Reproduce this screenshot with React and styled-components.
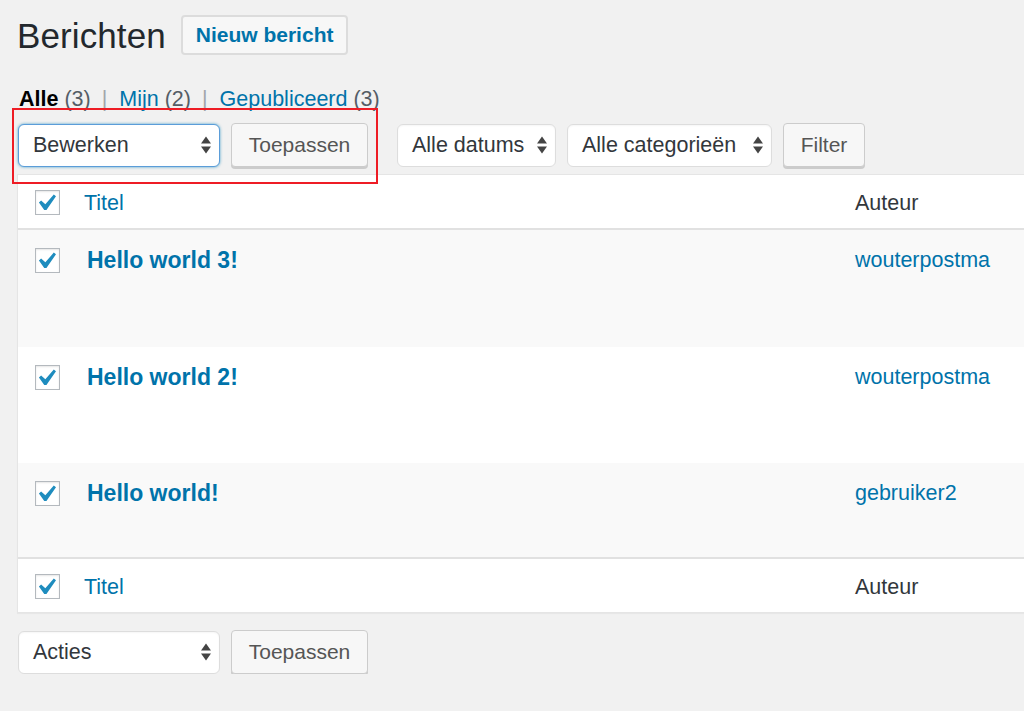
import React from "react";
import styled, { createGlobalStyle } from "styled-components";

const GlobalStyle = createGlobalStyle`
  html, body {
    margin: 0;
    padding: 0;
    background: #f1f1f1;
    overflow: hidden;
  }
  body {
    font-family: "Liberation Sans", Arial, Helvetica, sans-serif;
    color: #23282d;
  }
  * { box-sizing: border-box; }
`;

const Wrap = styled.div`
  padding: 15px 0 0 17px;
`;

const Header = styled.div`
  display: flex;
  align-items: center;
  gap: 15px;
`;

const PageTitle = styled.h1`
  margin: 0;
  font-size: 35px;
  font-weight: 400;
  line-height: 39px;
  color: #23282d;
  letter-spacing: 0.1px;
`;

const AddNew = styled.a`
  display: inline-flex;
  align-items: center;
  height: 40px;
  padding: 0 13px;
  border: 2px solid #dcdcdc;
  border-radius: 4px;
  background: #f7f7f7;
  color: #0073aa;
  font-size: 21px;
  font-weight: 700;
  text-decoration: none;
`;

const Tabs = styled.ul`
  display: flex;
  align-items: center;
  margin: 31px 0 0 2px;
  padding: 0;
  list-style: none;
  font-size: 21.5px;
  line-height: 26px;
`;

const Tab = styled.li`
  color: ${(p) => (p.$current ? "#000" : "#0073aa")};
  font-weight: ${(p) => (p.$current ? 700 : 400)};
`;

const Count = styled.span`
  color: #555d66;
  font-weight: 400;
`;

const Sep = styled.span`
  color: #a0a5aa;
  padding: 0 12px 0 11px;
`;

const Toolbar = styled.div`
  display: flex;
  align-items: center;
  margin-top: 11px;
  padding-left: 1px;
`;

const Group = styled.div`
  position: relative;
  display: flex;
  align-items: center;
  gap: 11px;
  margin-right: ${(p) => p.$gap || 0}px;
`;

const Highlight = styled.div`
  position: absolute;
  left: -6px;
  top: -15px;
  right: -10px;
  bottom: -17px;
  border: 2px solid #ee1c25;
  pointer-events: none;
`;

const SelectBox = styled.div`
  position: relative;
  display: flex;
  align-items: center;
  width: ${(p) => p.$width}px;
  height: 43px;
  padding: 0 30px 0 14px;
  background: #fff;
  border: 1px solid ${(p) => (p.$focus ? "#5b9dd9" : "#ddd")};
  border-radius: 6px;
  box-shadow: ${(p) =>
    p.$focus
      ? "0 0 3px rgba(30, 140, 190, 0.8)"
      : "inset 0 1px 2px rgba(0, 0, 0, 0.04)"};
  font-size: 21.5px;
  color: #32373c;
  white-space: nowrap;
`;

const Arrows = styled.svg`
  position: absolute;
  right: 8px;
  top: 50%;
  width: 10px;
  height: 19px;
  transform: translateY(-50%);
`;

const Button = styled.button`
  height: 44px;
  width: ${(p) => p.$width}px;
  padding: 0;
  background: #f7f7f7;
  border: 1px solid #ccc;
  border-radius: 4px;
  box-shadow: 0 2px 0 #ccc;
  font-family: inherit;
  font-size: 21px;
  color: #555;
`;

const Table = styled.div`
  margin: 7px -30px 0 0;
  background: #fff;
  border: 1px solid #e5e5e5;
  box-shadow: 0 1px 1px rgba(0, 0, 0, 0.04);
`;

const Row = styled.div`
  display: grid;
  grid-template-columns: 66px 771px 1fr;
  align-items: ${(p) => (p.$head ? "center" : "start")};
  height: ${(p) => p.$height}px;
  background: ${(p) => (p.$alt ? "#f9f9f9" : "#fff")};
  border-top: ${(p) => (p.$foot ? "2px solid #e1e1e1" : "none")};
  border-bottom: ${(p) => (p.$head && !p.$foot ? "2px solid #e1e1e1" : "none")};
  font-size: 21.5px;
`;

const CheckCell = styled.div`
  padding: ${(p) => (p.$head ? "2px" : "18px")} 0 0 17px;
  display: flex;
`;

const Check = styled.span`
  display: inline-flex;
  align-items: center;
  justify-content: center;
  width: 25px;
  height: 25px;
  background: #fff;
  border: 1px solid #b4b9be;
  box-shadow: inset 0 1px 2px rgba(0, 0, 0, 0.1);
`;

const HeadLink = styled.a`
  padding-top: 3px;
  color: #0073aa;
  text-decoration: none;
`;

const HeadText = styled.span`
  padding-top: 3px;
  color: #32373c;
`;

const PostTitle = styled.a`
  display: block;
  padding: 15px 0 0 3px;
  line-height: 30px;
  font-size: 23px;
  font-weight: 700;
  color: #0073aa;
  text-decoration: none;
`;

const AuthorLink = styled.a`
  display: block;
  padding-top: 15px;
  line-height: 30px;
  color: #0073aa;
  text-decoration: none;
`;

const BottomBar = styled(Toolbar)`
  margin-top: 17px;
`;

function Checkmark() {
  return (
    <svg width="24" height="24" viewBox="4 3 14 14">
      <path
        d="M14.83 4.89l1.34.94-5.81 8.38H9.02L5.78 9.67l1.34-1.25 2.57 2.4z"
        fill="#1e8cbe"
      />
    </svg>
  );
}

function Select({ label, width, focus }) {
  return (
    <SelectBox $width={width} $focus={focus}>
      {label}
      <Arrows viewBox="0 0 10 19">
        <polygon points="0,8 5,1 10,8" fill="#444" />
        <polygon points="0,11 10,11 5,18" fill="#444" />
      </Arrows>
    </SelectBox>
  );
}

const posts = [
  { title: "Hello world 3!", author: "wouterpostma", height: 117, alt: true },
  { title: "Hello world 2!", author: "wouterpostma", height: 116, alt: false },
  { title: "Hello world!", author: "gebruiker2", height: 94, alt: true },
];

function App() {
  return (
    <Wrap>
      <GlobalStyle />
      <Header>
        <PageTitle>Berichten</PageTitle>
        <AddNew href="#">Nieuw bericht</AddNew>
      </Header>

      <Tabs>
        <Tab $current>
          Alle <Count>(3)</Count>
        </Tab>
        <Sep>|</Sep>
        <Tab>
          Mijn <Count>(2)</Count>
        </Tab>
        <Sep>|</Sep>
        <Tab>
          Gepubliceerd <Count>(3)</Count>
        </Tab>
      </Tabs>

      <Toolbar>
        <Group $gap={29}>
          <Select label="Bewerken" width={202} focus />
          <Button $width={137}>Toepassen</Button>
          <Highlight />
        </Group>
        <Group>
          <Select label="Alle datums" width={159} />
          <Select label="Alle categorieën" width={205} />
          <Button $width={82}>Filter</Button>
        </Group>
      </Toolbar>

      <Table>
        <Row $head $height={55}>
          <CheckCell $head>
            <Check>
              <Checkmark />
            </Check>
          </CheckCell>
          <HeadLink href="#">Titel</HeadLink>
          <HeadText>Auteur</HeadText>
        </Row>
        {posts.map((p) => (
          <Row key={p.title} $alt={p.alt} $height={p.height}>
            <CheckCell>
              <Check>
                <Checkmark />
              </Check>
            </CheckCell>
            <PostTitle href="#">{p.title}</PostTitle>
            <AuthorLink href="#">{p.author}</AuthorLink>
          </Row>
        ))}
        <Row $head $foot $height={55}>
          <CheckCell $head>
            <Check>
              <Checkmark />
            </Check>
          </CheckCell>
          <HeadLink href="#">Titel</HeadLink>
          <HeadText>Auteur</HeadText>
        </Row>
      </Table>

      <BottomBar>
        <Group>
          <Select label="Acties" width={202} />
          <Button $width={137}>Toepassen</Button>
        </Group>
      </BottomBar>
    </Wrap>
  );
}

export default App;
